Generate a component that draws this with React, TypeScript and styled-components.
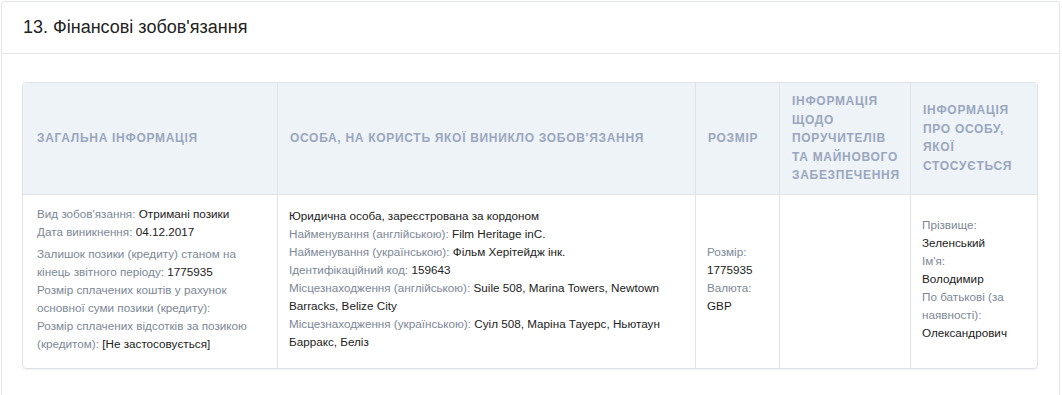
import React from "react";
import styled, { createGlobalStyle } from "styled-components";

const Global = createGlobalStyle`
  html, body { margin: 0; padding: 0; background: #fff; }
  body { font-family: "Liberation Sans", Arial, sans-serif; color: #333; }
`;

const Card = styled.section`
  margin: 1px 0 0 1px;
  width: 1059px;
  border: 1px solid #e3e6ea;
  border-radius: 3px;
  box-sizing: border-box;
  min-height: 420px;
`;

const CardHeader = styled.header`
  height: 52px;
  box-sizing: border-box;
  border-bottom: 1px solid #e3e6ea;
  display: flex;
  align-items: center;
  padding: 0 21px;
`;

const Title = styled.h2`
  margin: 0;
  font-size: 18px;
  font-weight: normal;
  color: #222;
`;

const CardBody = styled.div`
  padding: 28px 20px 20px 20px;
`;

const Table = styled.table`
  width: 1016px;
  border-collapse: separate;
  border-spacing: 0;
  border: 1px solid #dfe3e8;
  border-radius: 4px;
  box-shadow: 0 1px 2px rgba(0, 0, 0, 0.06);
  table-layout: fixed;
  overflow: hidden;
`;

const Th = styled.th<{ $first?: boolean; $last?: boolean }>`
  background: #eef3f8;
  color: #9aa6be;
  font-size: 12px;
  font-weight: bold;
  text-transform: uppercase;
  letter-spacing: 0.7px;
  line-height: 18.5px;
  text-align: left;
  vertical-align: middle;
  padding: 9px 9px 9px ${(p) => (p.$first ? "14px" : "12px")};
  height: 111px;
  box-sizing: border-box;
  border-bottom: 1px solid #dfe3e8;
  border-right: ${(p) => (p.$last ? "none" : "1px solid #dfe3e8")};
`;

const Td = styled.td<{ $first?: boolean; $last?: boolean }>`
  font-size: 11.7px;
  line-height: 18px;
  vertical-align: middle;
  padding: 10px 12px 15px ${(p) => (p.$first ? "14px" : "11px")};
  height: 173px;
  box-sizing: border-box;
  border-right: ${(p) => (p.$last ? "none" : "1px solid #dfe3e8")};
  color: #222;
`;

const Line = styled.div<{ $gap?: boolean }>`
  margin-top: ${(p) => (p.$gap ? "4px" : "0")};
`;

const Label = styled.span`
  color: #7d8796;
`;

const Value = styled.span`
  color: #222;
`;

const Stack = styled.div`
  display: flex;
  flex-direction: column;
`;

export default function App() {
  return (
    <>
      <Global />
      <Card>
        <CardHeader>
          <Title>13. Фінансові зобов'язання</Title>
        </CardHeader>
        <CardBody>
          <Table>
            <colgroup>
              <col style={{ width: 255 }} />
              <col style={{ width: 418 }} />
              <col style={{ width: 84 }} />
              <col style={{ width: 131 }} />
              <col style={{ width: 126 }} />
            </colgroup>
            <thead>
              <tr>
                <Th $first>Загальна інформація</Th>
                <Th>Особа, на користь якої виникло зобов'язання</Th>
                <Th>Розмір</Th>
                <Th>Інформація щодо поручителів та майнового забезпечення</Th>
                <Th $last>Інформація про особу, якої стосується</Th>
              </tr>
            </thead>
            <tbody>
              <tr>
                <Td $first>
                  <Line>
                    <Label>Вид зобов'язання: </Label>
                    <Value>Отримані позики</Value>
                  </Line>
                  <Line>
                    <Label>Дата виникнення: </Label>
                    <Value>04.12.2017</Value>
                  </Line>
                  <Line $gap>
                    <Label>Залишок позики (кредиту) станом на кінець звітного періоду: </Label>
                    <Value>1775935</Value>
                  </Line>
                  <Line>
                    <Label>Розмір сплачених коштів у рахунок основної суми позики (кредиту): </Label>
                  </Line>
                  <Line>
                    <Label>Розмір сплачених відсотків за позикою (кредитом): </Label>
                    <Value>[Не застосовується]</Value>
                  </Line>
                </Td>
                <Td>
                  <Line>
                    <Value>Юридична особа, зареєстрована за кордоном</Value>
                  </Line>
                  <Line>
                    <Label>Найменування (англійською): </Label>
                    <Value>Film Heritage inC.</Value>
                  </Line>
                  <Line>
                    <Label>Найменування (українською): </Label>
                    <Value>Фільм Херітейдж інк.</Value>
                  </Line>
                  <Line>
                    <Label>Ідентифікаційний код: </Label>
                    <Value>159643</Value>
                  </Line>
                  <Line>
                    <Label>Місцезнаходження (англійською): </Label>
                    <Value>Suile 508, Marina Towers, Newtown Barracks, Belize City</Value>
                  </Line>
                  <Line>
                    <Label>Місцезнаходження (українською): </Label>
                    <Value>Суіл 508, Маріна Тауерс, Ньютаун Барракс, Беліз</Value>
                  </Line>
                </Td>
                <Td>
                  <Stack>
                    <Label>Розмір:</Label>
                    <Value>1775935</Value>
                    <Label>Валюта:</Label>
                    <Value>GBP</Value>
                  </Stack>
                </Td>
                <Td></Td>
                <Td $last>
                  <Stack>
                    <Label>Прізвище:</Label>
                    <Value>Зеленський</Value>
                    <Label>Ім'я:</Label>
                    <Value>Володимир</Value>
                    <Label>По батькові (за наявності):</Label>
                    <Value>Олександрович</Value>
                  </Stack>
                </Td>
              </tr>
            </tbody>
          </Table>
        </CardBody>
      </Card>
    </>
  );
}
